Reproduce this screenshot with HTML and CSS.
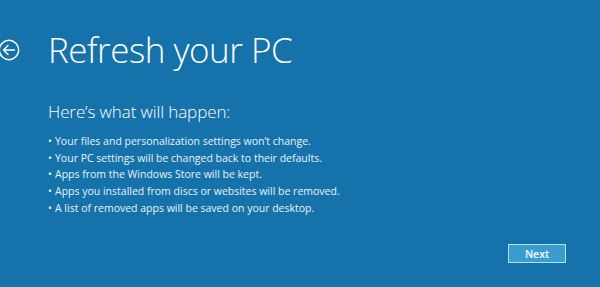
FILE: index.html
```html
<!DOCTYPE html>
<html>
<head>
<meta charset="utf-8">
<link rel="stylesheet" href="styles.css">
</head>
<body>
<div class="page">
  <header class="top">
    <svg class="back" width="22" height="22" viewBox="0 0 22 22">
      <circle cx="11" cy="11" r="9.7" fill="none" stroke="#ffffff" stroke-width="1.4"/>
      <path d="M5.5 11 H16.5 M10 6.5 L5.5 11 L10 15.5" fill="none" stroke="#ffffff" stroke-width="1.4" stroke-linecap="round" stroke-linejoin="round"/>
    </svg>
    <h1 class="title">Refresh your PC</h1>
  </header>
  <section class="content">
    <h2 class="subtitle">Here’s what will happen:</h2>
    <ul class="list">
      <li>Your files and personalization settings won’t change.</li>
      <li>Your PC settings will be changed back to their defaults.</li>
      <li>Apps from the Windows Store will be kept.</li>
      <li>Apps you installed from discs or websites will be removed.</li>
      <li>A list of removed apps will be saved on your desktop.</li>
    </ul>
  </section>
  <footer class="actions">
    <button class="next">Next</button>
  </footer>
</div>
</body>
</html>
```
FILE: styles.css
```css
html, body {
  margin: 0;
  padding: 0;
}
body {
  background: #1672ab;
  color: #ffffff;
  font-family: "Open Sans", "Segoe UI", "Noto Sans", sans-serif;
  width: 600px;
  height: 287px;
  overflow: hidden;
}
.page {
  display: flex;
  flex-direction: column;
  height: 287px;
}
.top {
  display: flex;
  align-items: center;
  padding-top: 30px;
  height: 40px;
}
.back {
  margin-left: -2px;
  flex: none;
}
.title {
  margin: 0 0 0 28px;
  font-size: 35px;
  font-weight: 300;
  letter-spacing: -0.5px;
  line-height: 40px;
}
.content {
  padding-left: 48px;
  padding-top: 30px;
}
.subtitle {
  margin: 0;
  font-size: 17px;
  font-weight: 300;
  letter-spacing: -0.1px;
  line-height: 24px;
}
.list {
  list-style: none;
  margin: 9px 0 0 0;
  padding: 0;
  font-size: 10.5px;
  line-height: 16.7px;
  color: #e8f2f8;
}
.list li::before {
  content: "•";
  display: inline-block;
  width: 7px;
}
.actions {
  margin-top: auto;
  display: flex;
  justify-content: flex-end;
  padding: 0 34px 24px 0;
}
.next {
  width: 58px;
  height: 19px;
  padding: 0;
  background: #3a9dcd;
  border: 1px solid #b7e0f0;
  color: #ffffff;
  font-family: "Open Sans", "Segoe UI", sans-serif;
  font-size: 10.5px;
  font-weight: 600;
}
```
